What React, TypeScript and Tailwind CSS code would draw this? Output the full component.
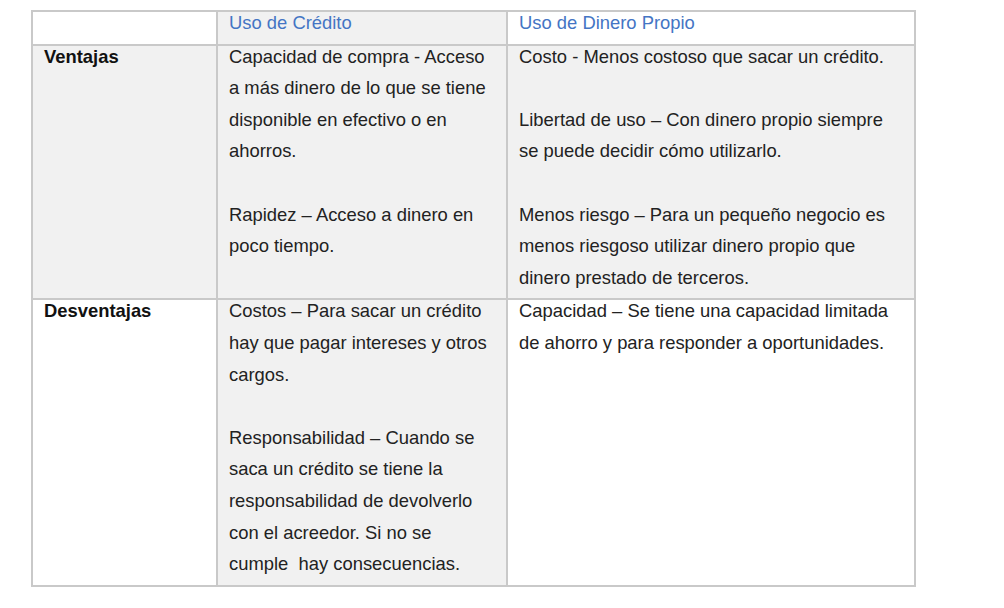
import React from 'react';

type Cell = { lines: string[]; shaded?: boolean; bold?: boolean; blue?: boolean };

const rows: Cell[][] = [
  [
    { lines: [''] },
    { lines: ['Uso de Crédito'], shaded: true, blue: true },
    { lines: ['Uso de Dinero Propio'], blue: true },
  ],
  [
    { lines: ['Ventajas'], shaded: true, bold: true },
    {
      lines: [
        'Capacidad de compra - Acceso',
        'a más dinero de lo que se tiene',
        'disponible en efectivo o en',
        'ahorros.',
        '',
        'Rapidez – Acceso a dinero en',
        'poco tiempo.',
      ],
      shaded: true,
    },
    {
      lines: [
        'Costo - Menos costoso que sacar un crédito.',
        '',
        'Libertad de uso – Con dinero propio siempre',
        'se puede decidir cómo utilizarlo.',
        '',
        'Menos riesgo – Para un pequeño negocio es',
        'menos riesgoso utilizar dinero propio que',
        'dinero prestado de terceros.',
      ],
      shaded: true,
    },
  ],
  [
    { lines: ['Desventajas'], bold: true },
    {
      lines: [
        'Costos – Para sacar un crédito',
        'hay que pagar intereses y otros',
        'cargos.',
        '',
        'Responsabilidad – Cuando se',
        'saca un crédito se tiene la',
        'responsabilidad de devolverlo',
        'con el acreedor. Si no se',
        'cumple  hay consecuencias.',
      ],
      shaded: true,
    },
    {
      lines: [
        'Capacidad – Se tiene una capacidad limitada',
        'de ahorro y para responder a oportunidades.',
      ],
    },
  ],
];

function TableCell({ cell }: { cell: Cell }) {
  return (
    <div
      className={`border-r-2 border-b-2 border-[#c9c9c9] px-[11px] ${
        cell.shaded ? 'bg-[#f1f1f1]' : 'bg-white'
      }`}
    >
      {cell.lines.map((line, i) => (
        <div
          key={i}
          className={`h-[31.6px] leading-[22px] whitespace-pre ${
            cell.bold ? 'font-bold text-[#111]' : 'text-[#222]'
          } ${cell.blue ? 'text-[#4475c4]' : ''}`}
        >
          {line}
        </div>
      ))}
    </div>
  );
}

export default function App() {
  return (
    <div
      className="w-[1004px] h-[608px] bg-white pt-[10px] pl-[31px]"
      style={{ fontFamily: '"Liberation Sans", Arial, sans-serif' }}
    >
      <div className="grid grid-cols-[185px_290px_408px] border-t-2 border-l-2 border-[#c9c9c9] w-max text-[18.4px]">
        {rows.map((row, r) =>
          row.map((cell, c) => <TableCell key={`${r}-${c}`} cell={cell} />)
        )}
      </div>
    </div>
  );
}
